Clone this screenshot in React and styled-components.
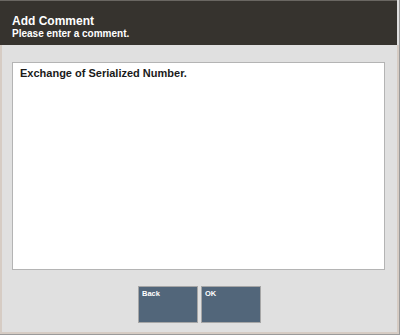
import styled, { createGlobalStyle } from "styled-components";

const Global = createGlobalStyle`
    html, body { margin: 0; padding: 0; background: #fff; }
    body { font-family: "Liberation Sans", Arial, sans-serif; }
`

export default function App(){
    return(
        <Window>
            <Global />
            <Header>
                <h1>Add Comment</h1>
                <p>Please enter a comment.</p>
            </Header>
            <Body>
                <CommentBox>Exchange of Serialized Number.</CommentBox>
                <Buttons>
                    <Button>Back</Button>
                    <Button>OK</Button>
                </Buttons>
            </Body>
        </Window>
    )
}

const Window = styled.div`
    width: 400px;
    height: 335px;
    box-sizing: border-box;
    display: flex;
    flex-direction: column;
    background-color: #e0e0e0;
    border-right: 1px solid #9a9a9a;
    border-bottom: 1px solid #9a9a9a;
    overflow: hidden;
`

const Header = styled.div`
    height: 45px;
    box-sizing: border-box;
    background-color: #36332e;
    border-top: 1px solid #6a6762;
    margin-right: 2px;
    padding: 13px 0 0 12px;
    color: #fff;
    h1{
        margin: 0;
        font-size: 12px;
        line-height: 14px;
        font-weight: bold;
    }
    p{
        margin: 0;
        font-size: 10px;
        line-height: 12px;
        font-weight: bold;
    }
`

const Body = styled.div`
    flex: 1;
    display: flex;
    flex-direction: column;
    border-left: 2px solid #d6ccc4;
    border-right: 2px solid #d6ccc4;
    border-bottom: 2px solid #d6ccc4;
    padding: 17px 12px 0 10px;
`

const CommentBox = styled.div`
    height: 208px;
    box-sizing: border-box;
    background-color: #fff;
    border: 1px solid #b4b4b4;
    padding: 4px 7px;
    font-size: 11px;
    font-weight: bold;
    color: #1a1a1a;
`

const Buttons = styled.div`
    display: flex;
    justify-content: center;
    gap: 3px;
    margin-top: 16px;
    padding-left: 2px;
`

const Button = styled.button`
    width: 60px;
    height: 37px;
    box-sizing: border-box;
    background-color: #52667a;
    border: 1px solid #a6a6a6;
    border-radius: 0;
    color: #fff;
    font-family: "Liberation Sans", Arial, sans-serif;
    font-size: 7.5px;
    font-weight: bold;
    text-align: left;
    padding: 2px 3px;
    display: flex;
    align-items: flex-start;
`
